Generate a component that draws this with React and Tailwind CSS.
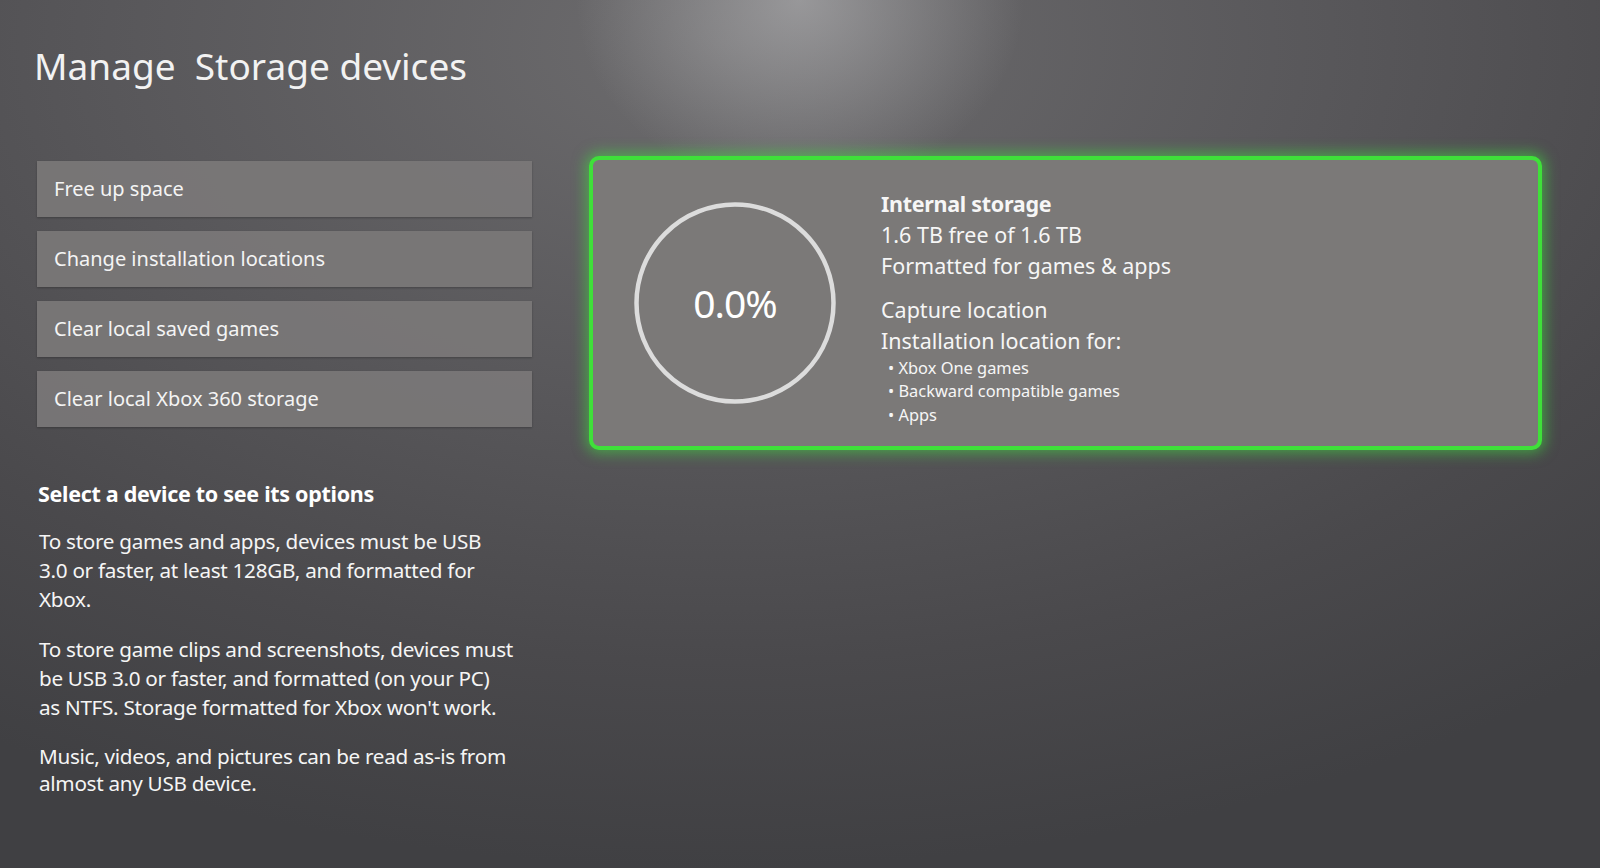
import React from 'react';

const MENU = [
    'Free up space',
    'Change installation locations',
    'Clear local saved games',
    'Clear local Xbox 360 storage',
];

const TARGETS = ['Xbox One games', 'Backward compatible games', 'Apps'];

function UsageRing({ percent }) {
    return (
        <div className="relative w-[202px] h-[202px] shrink-0 flex items-center justify-center">
            <svg className="absolute inset-0" width="202" height="202" viewBox="0 0 202 202">
                <circle cx="101" cy="101" r="98.5" fill="none" stroke="#dcdcdc" strokeWidth="4.5" />
            </svg>
            <span className="text-[39px] text-white tracking-tight">{percent}</span>
        </div>
    );
}

export default function App() {
    return (
        <div
            className="w-full h-[868px] overflow-hidden text-white bg-[radial-gradient(ellipse_14%_22%_at_50%_0%,rgba(190,190,192,0.55)_0%,rgba(190,190,192,0)_100%),radial-gradient(ellipse_85%_95%_at_45%_5%,#6d6c6e_0%,#58575a_45%,#4a494c_75%,#404043_100%)]"
            style={{ fontFamily: '"Noto Sans", "Open Sans", sans-serif' }}
        >
            <h1 className="pl-[34px] pt-[40px] text-[37px] leading-[52px] text-[#f2f2f2]">
                Manage&nbsp; Storage devices
            </h1>

            <div className="flex items-start mt-[64px]">
                <div className="w-[495px] ml-[37px] mt-[5px] flex flex-col shrink-0">
                    <div className="flex flex-col gap-[14px]">
                        {MENU.map((label) => (
                            <div
                                key={label}
                                className="h-[56px] flex items-center pl-[17px] bg-[#7b7979]/90 text-[20px] text-[#f4f4f4] shadow-[0_1px_2px_rgba(0,0,0,0.25)]"
                            >
                                {label}
                            </div>
                        ))}
                    </div>

                    <h2 className="mt-[52px] pl-[1px] text-[21.5px] font-bold leading-[29px] tracking-[-0.3px]">
                        Select a device to see its options
                    </h2>
                    <div className="mt-[19px] pl-[2px] w-[497px] flex flex-col gap-[21px] text-[20.7px] leading-[29px] tracking-[-0.3px] text-[#f5f5f5]">
                        <p>
                            To store games and apps, devices must be USB
                            <br />
                            3.0 or faster, at least 128GB, and formatted for
                            <br />
                            Xbox.
                        </p>
                        <p>
                            To store game clips and screenshots, devices must
                            <br />
                            be USB 3.0 or faster, and formatted (on your PC)
                            <br />
                            as NTFS. Storage formatted for Xbox won't work.
                        </p>
                        <p className="leading-[27px]">
                            Music, videos, and pictures can be read as-is from
                            <br />
                            almost any USB device.
                        </p>
                    </div>
                </div>

                <div className="ml-[57px] w-[953px] h-[294px] shrink-0 rounded-[10px] border-[4px] border-[#3fe03a] bg-[#7b7978] shadow-[0_0_14px_3px_rgba(60,230,60,0.55)] flex items-center pl-[41px]">
                    <UsageRing percent="0.0%" />
                    <div className="ml-[45px] pt-[8px] text-[21.5px] leading-[31px] text-[#f6f6f6]">
                        <div className="font-bold text-[21.5px] tracking-[-0.3px]">Internal storage</div>
                        <div>1.6 TB free of 1.6 TB</div>
                        <div>Formatted for games &amp; apps</div>
                        <div className="mt-[13px]">Capture location</div>
                        <div>Installation location for:</div>
                        <ul className="text-[16.4px] leading-[23.5px] pl-[7px]">
                            {TARGETS.map((t) => (
                                <li key={t}>• {t}</li>
                            ))}
                        </ul>
                    </div>
                </div>
            </div>
        </div>
    );
}
